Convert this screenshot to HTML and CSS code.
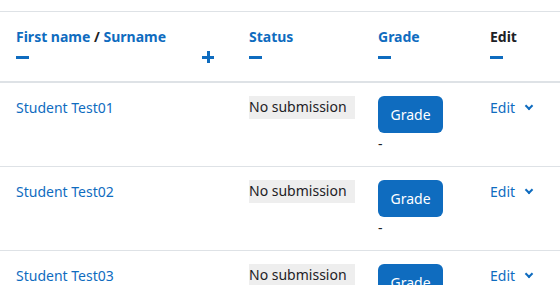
FILE: index.html
```html
<!DOCTYPE html>
<html lang="en">

<head>
    <meta charset="UTF-8">
    <meta name="viewport" content="width=device-width, initial-scale=1.0">
    <title>Submissions</title>
    <link rel="stylesheet" href="styles.css">
</head>

<body>
    <table class="grading-table">
        <thead>
            <tr>
                <th class="col-name">
                    <div class="head-title"><a href="#">First name</a> / <a href="#">Surname</a></div>
                    <div class="head-icons">
                        <span class="icon-minus"></span>
                        <span class="icon-plus"></span>
                    </div>
                </th>
                <th class="col-status">
                    <div class="head-title"><a href="#">Status</a></div>
                    <div class="head-icons"><span class="icon-minus"></span></div>
                </th>
                <th class="col-grade">
                    <div class="head-title"><a href="#">Grade</a></div>
                    <div class="head-icons"><span class="icon-minus"></span></div>
                </th>
                <th class="col-edit">
                    <div class="head-title">Edit</div>
                    <div class="head-icons"><span class="icon-minus"></span></div>
                </th>
            </tr>
        </thead>
        <tbody>
            <tr>
                <td><a href="#" class="name-link">Student Test01</a></td>
                <td><span class="status-box">No submission</span></td>
                <td><button class="btn-grade">Grade</button><div class="final-grade">-</div></td>
                <td><a href="#" class="edit-link">Edit <span class="chevron"></span></a></td>
            </tr>
            <tr>
                <td><a href="#" class="name-link">Student Test02</a></td>
                <td><span class="status-box">No submission</span></td>
                <td><button class="btn-grade">Grade</button><div class="final-grade">-</div></td>
                <td><a href="#" class="edit-link">Edit <span class="chevron"></span></a></td>
            </tr>
            <tr>
                <td><a href="#" class="name-link">Student Test03</a></td>
                <td><span class="status-box">No submission</span></td>
                <td><button class="btn-grade">Grade</button><div class="final-grade">-</div></td>
                <td><a href="#" class="edit-link">Edit <span class="chevron"></span></a></td>
            </tr>
        </tbody>
    </table>
</body>

</html>
```

FILE: styles.css
```css
body {
    font-family: "Noto Sans", sans-serif;
    font-size: 14px;
    color: #1d2125;
    background-color: #fff;
    margin: 0;
    padding: 11px 0 0 0;
}

a {
    color: #0f6cbf;
    text-decoration: none;
}

.grading-table {
    border-collapse: collapse;
    width: 100%;
    border-top: 1px solid #dee2e6;
}

.grading-table th {
    text-align: left;
    vertical-align: top;
    font-weight: bold;
    padding: 15px 0 0 0;
    height: 54px;
    border-bottom: 2px solid #dee2e6;
}

.grading-table td {
    vertical-align: top;
    padding: 13px 0 0 0;
    height: 70px;
    border-bottom: 1px solid #dee2e6;
}

.col-name {
    width: 233px;
}

.col-status {
    width: 129px;
}

.col-grade {
    width: 112px;
}

.grading-table tr > :first-child {
    padding-left: 16px;
}

.head-title {
    line-height: 20px;
}

.head-title a {
    color: #0f6cbf;
}

.head-icons {
    display: flex;
    justify-content: space-between;
    height: 20px;
    align-items: center;
    padding-right: 35px;
}

.icon-minus {
    width: 13px;
    height: 3px;
    background-color: #0f6cbf;
}

.icon-plus {
    position: relative;
    width: 12px;
    height: 12px;
}

.icon-plus::before,
.icon-plus::after {
    content: "";
    position: absolute;
    background-color: #0f6cbf;
}

.icon-plus::before {
    left: 0;
    top: 5px;
    width: 12px;
    height: 3px;
}

.icon-plus::after {
    left: 5px;
    top: 0;
    width: 3px;
    height: 12px;
}

.name-link {
    display: inline-block;
    line-height: 20px;
    margin-top: 2px;
}

.status-box {
    display: inline-block;
    background-color: #eeeeee;
    padding: 1px 8px 2px 0;
    line-height: 20px;
}

.btn-grade {
    font-family: inherit;
    font-size: 14px;
    color: #fff;
    background-color: #0f6cbf;
    border: none;
    border-radius: 6px;
    width: 65px;
    height: 37px;
    padding: 0;
    display: block;
}

.final-grade {
    line-height: 18px;
    margin-top: 2px;
}

.edit-link {
    display: inline-block;
    line-height: 20px;
    margin-top: 2px;
}

.chevron {
    display: inline-block;
    width: 4px;
    height: 4px;
    border-right: 2px solid #0f6cbf;
    border-bottom: 2px solid #0f6cbf;
    transform: rotate(45deg);
    margin: 0 0 4px 7px;
}
```
